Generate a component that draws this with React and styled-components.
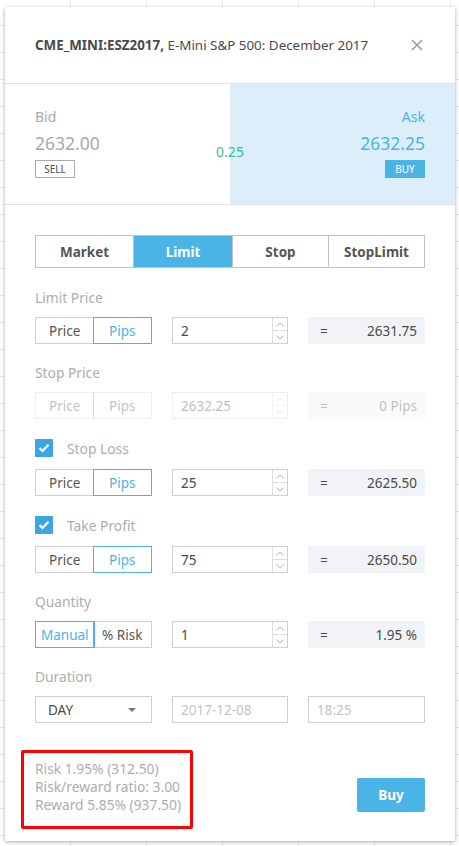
import React from "react";
import styled, { createGlobalStyle, css } from "styled-components";

const GlobalStyle = createGlobalStyle`
  html, body {
    margin: 0;
    padding: 0;
  }
  body {
    font-family: "Noto Sans", "Liberation Sans", sans-serif;
    background: #fff;
  }
`;

const BLUE = "#4bb4e6";
const LABEL = "#adadad";
const TEXT = "#4a4a4a";
const BORDER = "#cfcfcf";

// chart behind the dialog
const Chart = styled.div`
  width: 459px;
  height: 846px;
  box-sizing: border-box;
  padding: 7px 4px 5px 5px;
  background-color: #fff;
  background-image: linear-gradient(#e6e6e6 1px, transparent 1px),
    linear-gradient(90deg, #ececec 1px, transparent 1px);
  background-size: 100% 27px, 76px 100%;
  background-position: 0 25px, -6px 0;
`;

const Dialog = styled.div`
  width: 450px;
  height: 834px;
  background: #fff;
  box-shadow: 0 1px 4px rgba(0, 0, 0, 0.35);
  display: flex;
  flex-direction: column;
`;

const Header = styled.div`
  height: 76px;
  flex: none;
  border-bottom: 1px solid #e0e0e0;
  display: flex;
  align-items: center;
  justify-content: space-between;
  padding: 0 30px;
  color: ${TEXT};
  font-size: 13.4px;
`;

const Title = styled.div`
  b {
    font-weight: 700;
  }
`;

const Close = styled.button`
  border: 0;
  background: none;
  padding: 0;
  width: 12px;
  height: 12px;
  margin-right: 2px;
  display: flex;
  cursor: pointer;
`;

const Quote = styled.div`
  height: 120px;
  flex: none;
  border-bottom: 1px solid #e0e0e0;
  display: grid;
  grid-template-columns: 1fr 1fr;
`;

const Side = styled.div`
  grid-row: 1;
  grid-column: ${(p) => (p.$ask ? 2 : 1)};
  display: flex;
  flex-direction: column;
  align-items: ${(p) => (p.$ask ? "flex-end" : "flex-start")};
  padding: 24px 30px 0;
  background: ${(p) => (p.$ask ? "#dbeefa" : "transparent")};
  color: ${(p) => (p.$ask ? BLUE : "#a9a9a9")};
`;

const SideLabel = styled.div`
  font-size: 14px;
  line-height: 18px;
`;

const SidePrice = styled.div`
  font-size: 17.5px;
  line-height: 24px;
  margin-top: 5px;
`;

const SideButton = styled.div`
  margin-top: 5px;
  width: 40px;
  height: 18px;
  box-sizing: border-box;
  display: flex;
  align-items: center;
  justify-content: center;
  font-size: 10px;
  ${(p) =>
    p.$ask
      ? css`
          background: ${BLUE};
          color: #fff;
        `
      : css`
          border: 1px solid #aaa;
          color: ${TEXT};
        `}
`;

const Spread = styled.div`
  grid-row: 1;
  grid-column: 1 / 3;
  justify-self: center;
  align-self: start;
  margin-top: 58px;
  font-size: 14px;
  color: #3dbd92;
`;

const Body = styled.div`
  flex: 1;
  display: flex;
  flex-direction: column;
  padding: 30px 30px 0;
`;

const Tabs = styled.div`
  display: grid;
  grid-template-columns: 97px 99px 96px 1fr;
  height: 33px;
  border: 1px solid #c3c3c3;
  box-sizing: border-box;
`;

const Tab = styled.div`
  display: flex;
  align-items: center;
  justify-content: center;
  font-size: 13.5px;
  font-weight: 700;
  color: ${(p) => (p.$active ? "#fff" : "#555")};
  background: ${(p) => (p.$active ? BLUE : "#fff")};
  & + & {
    border-left: 1px solid #c3c3c3;
  }
`;

const Section = styled.div`
  margin-top: ${(p) => p.$gap || 20}px;
`;

const Label = styled.div`
  display: flex;
  align-items: center;
  gap: 14px;
  height: ${(p) => (p.$check ? 18 : 16)}px;
  font-size: 13.8px;
  color: ${LABEL};
  margin-bottom: 12px;
`;

const Check = styled.span`
  width: 18px;
  height: 18px;
  background: #3aa7e3;
  border-radius: 1px;
  display: flex;
  align-items: center;
  justify-content: center;
`;

const Row = styled.div`
  display: grid;
  grid-template-columns: 117px 116px 117px;
  gap: 20px;
  height: 27px;
  opacity: ${(p) => (p.$disabled ? 0.35 : 1)};
`;

const Toggle = styled.div`
  display: grid;
  grid-template-columns: 1fr 1fr;
  border: 1px solid ${BORDER};
  box-sizing: border-box;
`;

const ToggleOption = styled.div`
  display: flex;
  align-items: center;
  justify-content: center;
  font-size: 13.5px;
  margin: -1px;
  color: ${(p) => (p.$active ? BLUE : "#555")};
  border: 1px solid ${(p) => (p.$active ? BLUE : "transparent")};
  z-index: ${(p) => (p.$active ? 1 : 0)};
  & + & {
    border-left-color: ${(p) => (p.$active ? BLUE : BORDER)};
  }
`;

const NumberField = styled.div`
  display: flex;
  border: 1px solid ${BORDER};
  box-sizing: border-box;
  font-size: 13.5px;
  color: ${TEXT};
`;

const FieldValue = styled.div`
  flex: 1;
  display: flex;
  align-items: center;
  padding-left: 8px;
  color: ${(p) => (p.$muted ? "#c4c4c4" : TEXT)};
`;

const Spin = styled.div`
  width: 14px;
  border-left: 1px solid #ddd;
  display: flex;
  flex-direction: column;
  span {
    flex: 1;
    display: flex;
    align-items: center;
    justify-content: center;
  }
  span + span {
    border-top: 1px solid #ddd;
  }
`;

const Result = styled.div`
  background: #f1f3f6;
  display: flex;
  align-items: center;
  justify-content: space-between;
  padding: 0 8px 0 12px;
  font-size: 13.5px;
  color: ${TEXT};
`;

const Select = styled.div`
  border: 1px solid ${BORDER};
  box-sizing: border-box;
  display: flex;
  align-items: center;
  justify-content: space-between;
  padding: 0 15px 0 12px;
  font-size: 13.5px;
  color: ${TEXT};
`;

const Caret = styled.span`
  width: 0;
  height: 0;
  border-left: 4px solid transparent;
  border-right: 4px solid transparent;
  border-top: 4px solid #777;
`;

const Footer = styled.div`
  margin-top: 27px;
  display: flex;
  align-items: flex-start;
  justify-content: space-between;
`;

const RiskInfo = styled.div`
  margin-left: -14px;
  width: 172px;
  height: 79px;
  box-sizing: border-box;
  border: 3px solid #ff0000;
  border-radius: 2px;
  padding: 7px 0 0 11px;
  font-size: 13.8px;
  line-height: 18px;
  color: ${LABEL};
  white-space: nowrap;
`;

const BuyButton = styled.button`
  width: 68px;
  height: 34px;
  border: 0;
  border-radius: 2px;
  background: ${BLUE};
  color: #fff;
  font-family: inherit;
  font-size: 13.5px;
  font-weight: 700;
  margin-top: 28px;
`;

const Chevron = ({ up }) => (
  <svg width="8" height="5" viewBox="0 0 8 5">
    <path
      d={up ? "M0.5 4.5 L4 1 L7.5 4.5" : "M0.5 0.5 L4 4 L7.5 0.5"}
      fill="none"
      stroke="#b5b5b5"
      strokeWidth="1"
    />
  </svg>
);

const Stepper = ({ value, muted }) => (
  <NumberField>
    <FieldValue $muted={muted}>{value}</FieldValue>
    <Spin>
      <span>
        <Chevron up />
      </span>
      <span>
        <Chevron />
      </span>
    </Spin>
  </NumberField>
);

const PriceRow = ({ left = "Price", right = "Pips", active, value, result, disabled }) => (
  <Row $disabled={disabled}>
    <Toggle>
      <ToggleOption $active={active === 0}>{left}</ToggleOption>
      <ToggleOption $active={active === 1}>{right}</ToggleOption>
    </Toggle>
    <Stepper value={value} />
    <Result>
      <span>=</span>
      <span>{result}</span>
    </Result>
  </Row>
);

const CheckMark = () => (
  <Check>
    <svg width="12" height="10" viewBox="0 0 12 10">
      <path d="M1.5 5 L4.5 8 L10.5 1.8" fill="none" stroke="#fff" strokeWidth="2.2" />
    </svg>
  </Check>
);

export default function App() {
  return (
    <Chart>
      <GlobalStyle />
      <Dialog>
        <Header>
          <Title>
            <b>CME_MINI:ESZ2017,</b> E-Mini S&amp;P 500: December 2017
          </Title>
          <Close>
            <svg width="12" height="12" viewBox="0 0 12 12">
              <path d="M1 1 L11 11 M11 1 L1 11" stroke="#9b9b9b" strokeWidth="1.6" />
            </svg>
          </Close>
        </Header>

        <Quote>
          <Side>
            <SideLabel>Bid</SideLabel>
            <SidePrice>2632.00</SidePrice>
            <SideButton>SELL</SideButton>
          </Side>
          <Side $ask>
            <SideLabel>Ask</SideLabel>
            <SidePrice>2632.25</SidePrice>
            <SideButton $ask>BUY</SideButton>
          </Side>
          <Spread>0.25</Spread>
        </Quote>

        <Body>
          <Tabs>
            <Tab>Market</Tab>
            <Tab $active>Limit</Tab>
            <Tab>Stop</Tab>
            <Tab>StopLimit</Tab>
          </Tabs>

          <Section $gap={21}>
            <Label>Limit Price</Label>
            <PriceRow active={1} value="2" result="2631.75" />
          </Section>

          <Section>
            <Label>Stop Price</Label>
            <PriceRow active={-1} value="2632.25" result="0 Pips" disabled />
          </Section>

          <Section>
            <Label $check>
              <CheckMark />
              Stop Loss
            </Label>
            <PriceRow active={1} value="25" result="2625.50" />
          </Section>

          <Section>
            <Label $check>
              <CheckMark />
              Take Profit
            </Label>
            <PriceRow active={1} value="75" result="2650.50" />
          </Section>

          <Section>
            <Label>Quantity</Label>
            <PriceRow left="Manual" right="% Risk" active={0} value="1" result="1.95 %" />
          </Section>

          <Section>
            <Label>Duration</Label>
            <Row>
              <Select>
                DAY
                <Caret />
              </Select>
              <NumberField>
                <FieldValue $muted>2017-12-08</FieldValue>
              </NumberField>
              <NumberField>
                <FieldValue $muted>18:25</FieldValue>
              </NumberField>
            </Row>
          </Section>

          <Footer>
            <RiskInfo>
              <div>Risk 1.95% (312.50)</div>
              <div>Risk/reward ratio: 3.00</div>
              <div>Reward 5.85% (937.50)</div>
            </RiskInfo>
            <BuyButton>Buy</BuyButton>
          </Footer>
        </Body>
      </Dialog>
    </Chart>
  );
}
